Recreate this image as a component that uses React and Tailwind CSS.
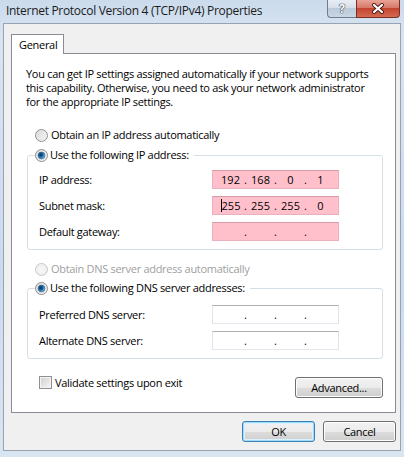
import React, { Fragment } from 'react';

const Radio = ({ checked, disabled }) => (
  <svg width="13" height="13" viewBox="0 0 13 13" className="shrink-0">
    <defs>
      <linearGradient id="rfill" x1="0" y1="0" x2="1" y2="1">
        <stop offset="0" stopColor="#d4d4d4" />
        <stop offset="1" stopColor="#fafafa" />
      </linearGradient>
      <radialGradient id="rdot" cx="0.4" cy="0.4" r="0.6">
        <stop offset="0" stopColor="#0b2c4f" />
        <stop offset="0.55" stopColor="#1f6aa5" />
        <stop offset="1" stopColor="#7cc4ef" />
      </radialGradient>
    </defs>
    <circle cx="6.5" cy="6.5" r="6" fill={disabled ? '#f4f4f4' : 'url(#rfill)'} stroke={disabled ? '#c5c5c5' : '#8e8f8f'} />
    <circle cx="6.5" cy="6.5" r="4.6" fill="none" stroke={disabled ? '#ececec' : '#e6e6e6'} />
    {checked && <circle cx="6.5" cy="6.5" r="3.4" fill="url(#rdot)" stroke="#1b4f7e" strokeWidth="0.6" />}
  </svg>
);

const IpBox = ({ parts, pink, caret }) => (
  <div
    className={`w-[127px] h-[19px] flex items-center pl-[5px] border tracking-normal ${
      pink
        ? 'bg-[#ffc0cb] border-[#eab0bb] border-t-[#d89aa7]'
        : 'bg-white border-[#e2e3ea] border-t-[#abadb3] border-b-[#e3e9ef]'
    }`}
  >
    {parts.map((p, i) => (
      <Fragment key={i}>
        <span className="w-[25px] flex justify-center items-center">
          {caret && i === 0 && <span className="w-px h-[13px] bg-black" />}
          {p}
        </span>
        {i < 3 && <span className="w-[5px] text-center">.</span>}
      </Fragment>
    ))}
  </div>
);

const Field = ({ label, parts, pink, caret }) => (
  <div className="flex items-center h-[19px]">
    <span className="w-[173px]">{label}</span>
    <IpBox parts={parts} pink={pink} caret={caret} />
  </div>
);

const WinButton = ({ children, primary, className }) => (
  <button
    className={`h-[21px] rounded-[3px] border flex items-center justify-center bg-[linear-gradient(#f2f2f2_0%,#ebebeb_50%,#dddddd_50%,#cfcfcf_100%)] ${
      primary
        ? 'border-[#3c7fb1] shadow-[inset_0_0_0_1px_#9ddcfa,inset_0_0_0_2px_#d9f2fd]'
        : 'border-[#707070] shadow-[inset_0_0_0_1px_#fcfcfc]'
    } ${className}`}
  >
    {children}
  </button>
);

export default function App() {
  return (
    <div className="w-[404px] h-[457px] overflow-hidden flex flex-col bg-[linear-gradient(180deg,#cbdbec_0%,#d8e4f1_8%,#c9dbed_60%,#d9e6f2_100%)] text-[11px] leading-[14px] tracking-[-0.3px] text-black font-['Open_Sans','Noto_Sans',sans-serif]">
      {/* title bar */}
      <div className="h-[23px] flex items-start justify-between shrink-0">
        <span className="pl-[6px] pt-[4px] text-[12px] text-[#1b1b1b]">Internet Protocol Version 4 (TCP/IPv4) Properties</span>
        <div className="flex mr-[4px]">
          <div className="w-[29px] h-[18px] rounded-bl-[4px] border border-t-0 border-r-0 border-[#6f7d8e] bg-[linear-gradient(#e9eef4_0%,#d6dfe9_45%,#bccad9_50%,#c9d6e3_100%)] flex items-center justify-center">
            <span className="text-white font-bold text-[12px] leading-none [text-shadow:0_0_1px_#2d3a4a,0_0_1px_#2d3a4a,0_0_1px_#2d3a4a]">?</span>
          </div>
          <div className="w-[44px] h-[18px] rounded-br-[4px] border border-t-0 border-[#7a2e24] bg-[linear-gradient(#e8a496_0%,#d8786a_45%,#c3442f_50%,#d56a52_100%)] flex items-center justify-center">
            <svg width="14" height="11" viewBox="0 0 14 11">
              <path d="M3 2 L11 9 M11 2 L3 9" stroke="#4a1a14" strokeWidth="4" strokeLinecap="round" />
              <path d="M3 2 L11 9 M11 2 L3 9" stroke="#ffffff" strokeWidth="2.2" strokeLinecap="round" />
            </svg>
          </div>
        </div>
      </div>

      {/* client area */}
      <div className="ml-[3px] w-[398px] h-[428px] border border-[#97a3b0] bg-[#f0f0f0] flex flex-col">
        <div className="pt-[10px] pl-[7px]">
          <div className="relative z-10 -mb-px w-[53px] h-[20px] border border-b-0 border-[#898c95] bg-white flex items-center pl-[7px]">
            General
          </div>
          <div className="w-[385px] h-[360px] border border-[#898c95] bg-white flex flex-col">
            <p className="mt-[13px] pl-[14px] leading-[14px] whitespace-nowrap">
              You can get IP settings assigned automatically if your network supports
              <br />
              this capability. Otherwise, you need to ask your network administrator
              <br />
              for the appropriate IP settings.
            </p>

            <div className="mt-[19px] pl-[23px] h-[14px] flex items-center gap-[3px]">
              <Radio />
              <span>Obtain an IP address automatically</span>
            </div>

            <fieldset className="mt-[6px] ml-[15px] w-[356px] border border-[#d5dfe5] rounded-[3px]">
              <legend className="ml-[7px] pr-[5px]">
                <span className="h-[14px] flex items-center gap-[2px]">
                  <Radio checked />
                  <span>Use the following IP address:</span>
                </span>
              </legend>
              <div className="pl-[11px] pt-[8px] pb-[8px] flex flex-col gap-[7px]">
                <Field label="IP address:" parts={['192', '168', '0', '1']} pink />
                <Field label="Subnet mask:" parts={['255', '255', '255', '0']} pink caret />
                <Field label="Default gateway:" parts={['', '', '', '']} pink />
              </div>
            </fieldset>

            <div className="mt-[12px] pl-[23px] h-[14px] flex items-center gap-[3px] text-[#a0a0a0]">
              <Radio disabled />
              <span>Obtain DNS server address automatically</span>
            </div>

            <fieldset className="mt-[5px] ml-[15px] w-[356px] border border-[#d5dfe5] rounded-[3px]">
              <legend className="ml-[7px] pr-[5px]">
                <span className="h-[14px] flex items-center gap-[2px]">
                  <Radio checked />
                  <span>Use the following DNS server addresses:</span>
                </span>
              </legend>
              <div className="pl-[11px] pt-[10px] pb-[8px] flex flex-col gap-[7px]">
                <Field label="Preferred DNS server:" parts={['', '', '', '']} />
                <Field label="Alternate DNS server:" parts={['', '', '', '']} />
              </div>
            </fieldset>

            <div className="mt-[17px] pl-[27px] pr-[12px] flex items-start justify-between">
              <div className="flex items-center gap-[3px] h-[13px]">
                <span className="w-[13px] h-[13px] border border-[#8e8f8f] bg-[linear-gradient(135deg,#cfcfcf,#f7f7f7)] shadow-[inset_0_0_0_1px_#f4f4f4]" />
                <span>Validate settings upon exit</span>
              </div>
              <WinButton className="mt-[1px] w-[88px]">Advanced...</WinButton>
            </div>
          </div>
        </div>

        <div className="pt-[8px] pr-[4px] flex justify-end gap-[8px]">
          <WinButton primary className="w-[73px]">OK</WinButton>
          <WinButton className="w-[73px]">Cancel</WinButton>
        </div>
      </div>
    </div>
  );
}
